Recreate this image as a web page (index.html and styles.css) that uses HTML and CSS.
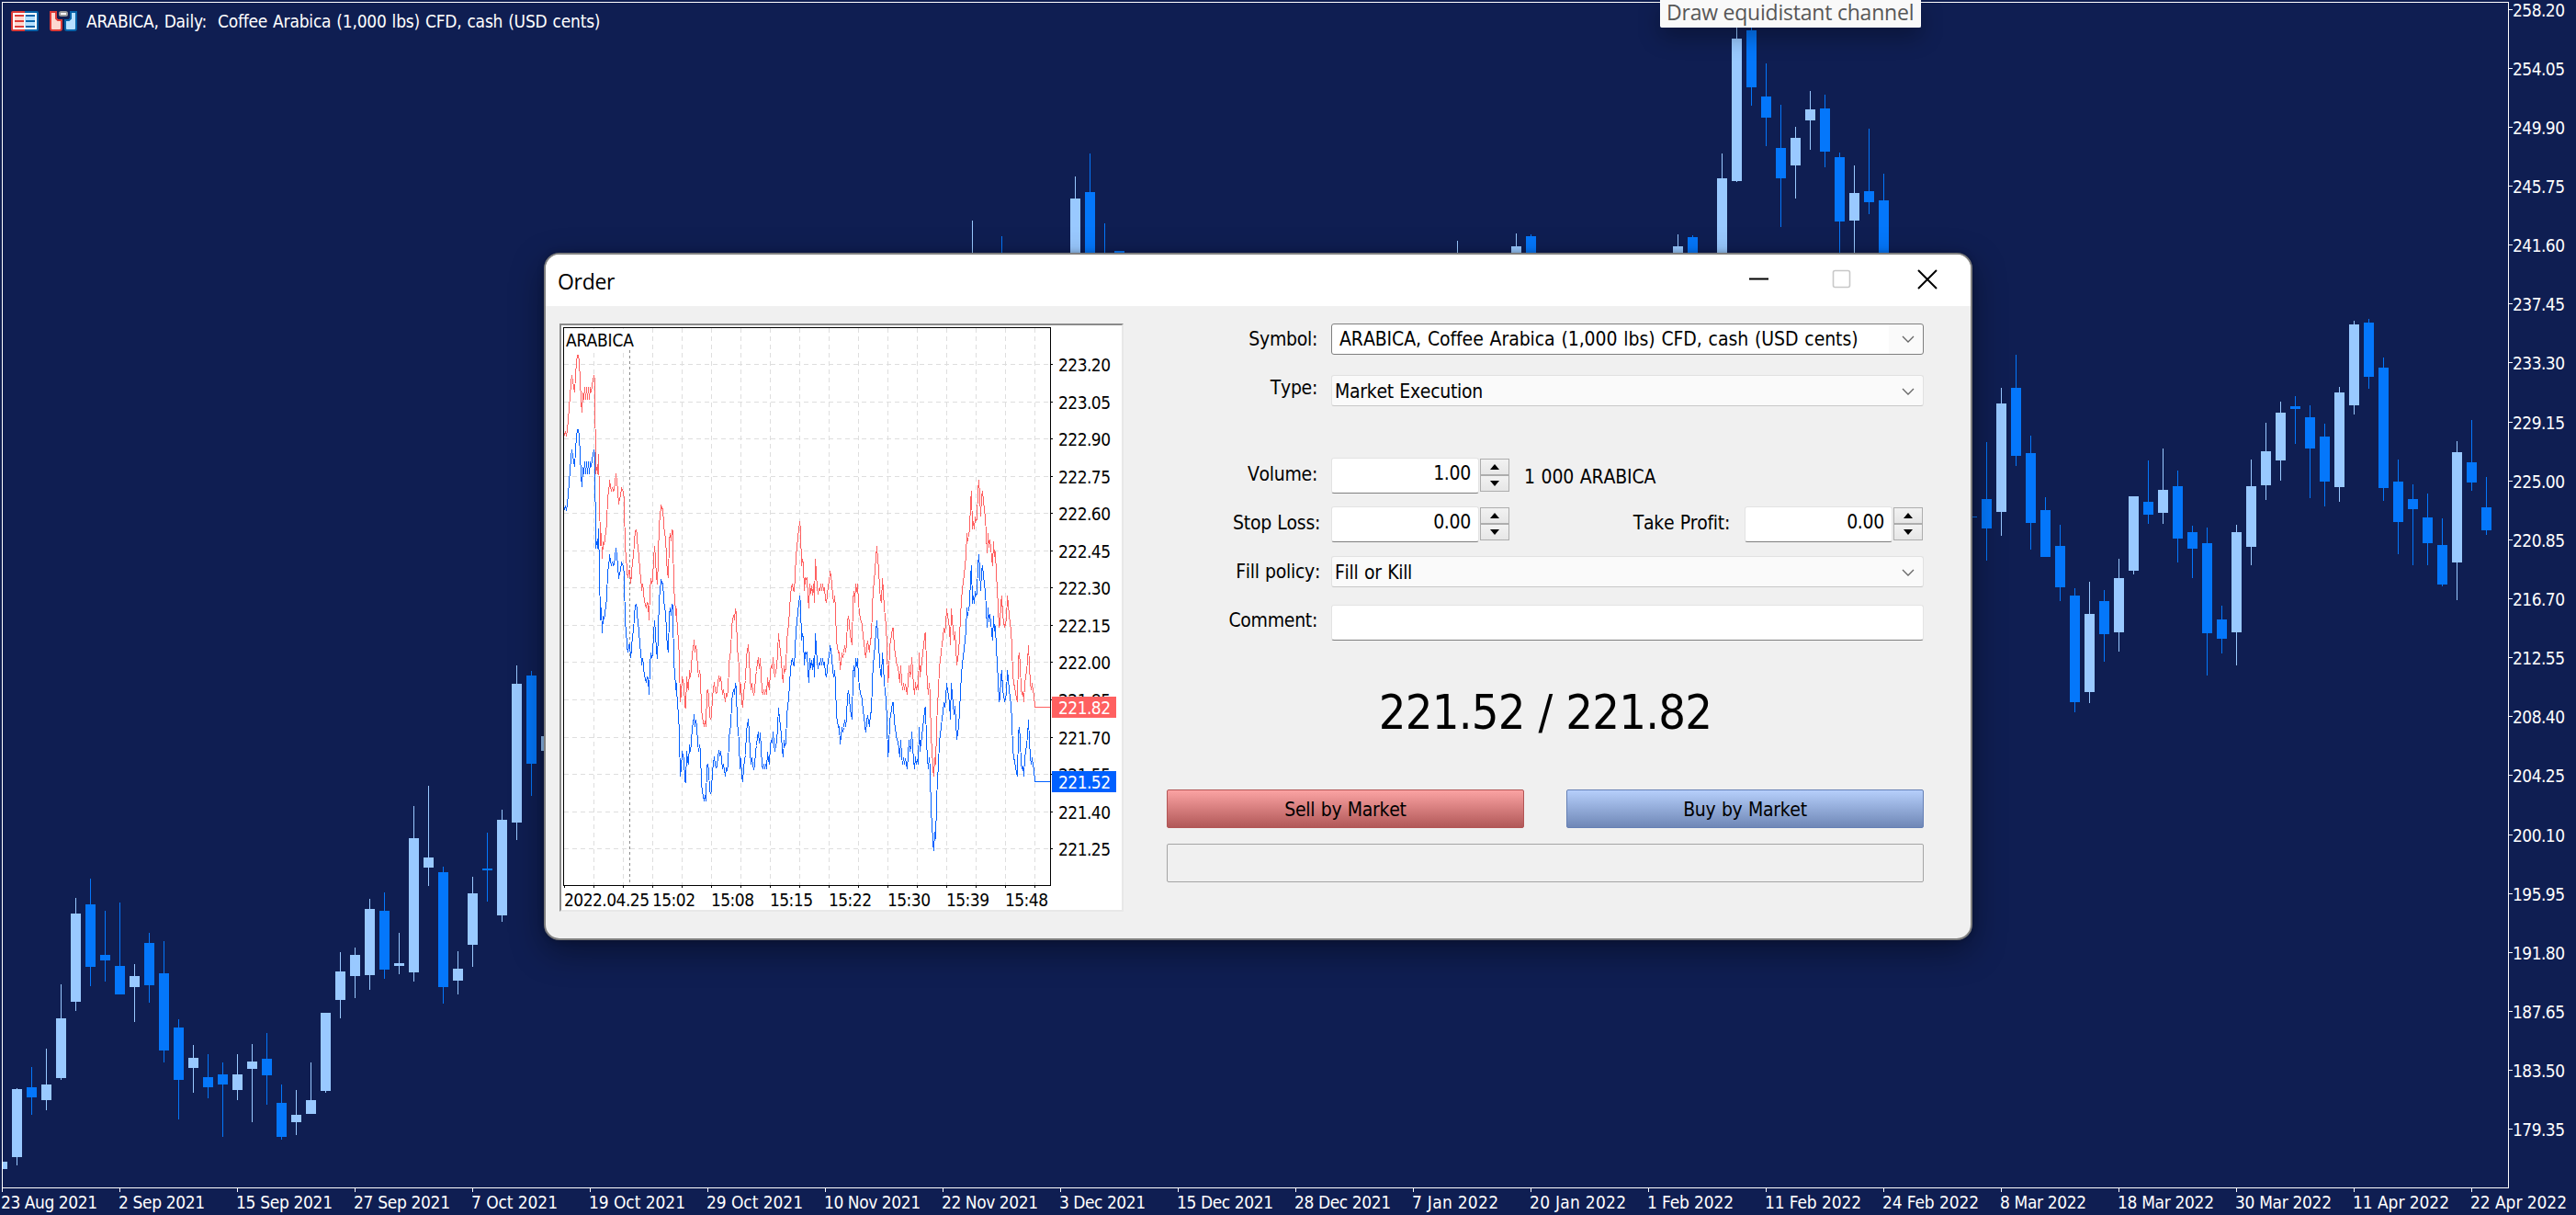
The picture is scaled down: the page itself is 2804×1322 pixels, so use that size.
FILE: index.html
```html
<!DOCTYPE html>
<html lang="en">
<head>
  <meta charset="UTF-8" />
  <title>ARABICA, Daily</title>
  <link rel="stylesheet" href="styles.css">
</head>
<body>

  <div class="terminal">
    <svg class="chart" id="chart" width="2804" height="1322" viewBox="0 0 2804 1322">
      <g id="candles"></g>
      <path class="frame" d="M2 2H2731V3H3V1292H2730V3H2731V1293H2V2Z" />
      <g id="priceAxis"></g>
      <g id="timeAxis"></g>
    </svg>

    <div class="chart-title">
      <svg width="30" height="22" viewBox="0 0 30 22">
        <path d="M2 0H15V22H2Q0 22 0 20V2Q0 0 2 0Z" fill="#dc3a36" />
        <path d="M15 0H28Q30 0 30 2V20Q30 22 28 22H15Z" fill="#0562a8" />
        <rect x="2" y="2" width="26" height="18" fill="#fff" />
        <rect x="4" y="4" width="10" height="14" fill="#fdd8d0" />
        <rect x="15" y="4" width="11" height="14" fill="#b7e0ff" />
        <path d="M4 4h10v2H4zM4 10h10v2H4zM4 16h10v2H4z" fill="#dc3a36" />
        <path d="M16 4h10v2H16zM16 10h10v2H16zM16 16h10v2H16z" fill="#0562a8" />
      </svg>
      <svg width="30" height="22" viewBox="0 0 30 22">
        <path d="M1 1H7V8L9 10H13V19Q13 21 11 21H3Q1 21 1 19Z" fill="#fdd8d0" stroke="#dc3a36" stroke-width="2" />
        <path d="M23 1H29V19Q29 21 27 21H19Q17 21 17 19V10H21L23 8Z" fill="#b7e0ff" stroke="#0562a8" stroke-width="2" />
        <rect x="11" y="1" width="8" height="4" rx="1.5" fill="#fff" stroke="#999" stroke-width="2" />
      </svg>
      <span class="chart-name">ARABICA, Daily:&nbsp; Coffee Arabica (1,000 lbs) CFD, cash (USD cents)</span>
    </div>

    <div class="tooltip">Draw equidistant channel</div>

    <div class="dialog">
      <div class="titlebar">
        <span class="caption">Order</span>
        <svg class="controls" width="206" height="24" viewBox="0 0 206 24">
          <path d="M0 11.5H21" stroke="#000" stroke-width="2" />
          <rect x="91.5" y="2.5" width="18" height="18" rx="2" fill="none" stroke="#c8c8c8" stroke-width="1.6" />
          <path d="M184 2L204 22M204 2L184 22" stroke="#000" stroke-width="2" />
        </svg>
      </div>

      <div class="content">
        <div class="ticks">
          <svg id="ticks" width="610" height="636" viewBox="611 354 610 636"></svg>
        </div>

        <div class="form">
          <div class="row row-symbol">
            <label>Symbol:</label>
            <div class="select active"><span>ARABICA, Coffee Arabica (1,000 lbs) CFD, cash (USD cents)</span><i><svg width="14" height="8" viewBox="0 0 14 8"><path d="M1 1L7 7L13 1" /></svg></i></div>
          </div>
          <div class="row row-type">
            <label>Type:</label>
            <div class="select"><span>Market Execution</span><i><svg width="14" height="8" viewBox="0 0 14 8"><path d="M1 1L7 7L13 1" /></svg></i></div>
          </div>
          <div class="row row-volume">
            <label>Volume:</label>
            <div class="input number">1.00</div>
            <div class="spin"><b class="up"></b><b class="down"></b></div>
            <span class="units">1 000 ARABICA</span>
          </div>
          <div class="row row-stops">
            <label class="wide">Stop Loss:</label>
            <div class="input number">0.00</div>
            <div class="spin"><b class="up"></b><b class="down"></b></div>
            <label class="take">Take Profit:</label>
            <div class="input number">0.00</div>
            <div class="spin"><b class="up"></b><b class="down"></b></div>
          </div>
          <div class="row row-fill">
            <label class="wide">Fill policy:</label>
            <div class="select"><span>Fill or Kill</span><i><svg width="14" height="8" viewBox="0 0 14 8"><path d="M1 1L7 7L13 1" /></svg></i></div>
          </div>
          <div class="row row-comment">
            <label>Comment:</label>
            <div class="input text"></div>
          </div>
          <div class="quote">221.52 / 221.82</div>
          <div class="buttons">
            <div class="btn sell">Sell by Market</div>
            <div class="btn buy">Buy by Market</div>
          </div>
          <div class="status"></div>
        </div>
      </div>
    </div>
  </div>

  <script src="chart.js"></script>
</body>
</html>
```
FILE: styles.css
```css
body {
  margin: 0;
  background: #0f1e52;
  font-family: "DejaVu Sans Condensed", "DejaVu Sans", sans-serif;
  font-stretch: condensed;
  overflow: hidden;
}

.terminal {
  position: relative;
  width: 2804px;
  height: 1322px;
  overflow: hidden;
}

.chart {
  display: block;
  shape-rendering: crispEdges;
}

.chart text,
.ticks text {
  font-size: 19px;
}

.chart text {
  fill: #fff;
}

.frame {
  fill: #fff;
}

.up-bar {
  fill: #99c9ff;
}

.down-bar {
  fill: #0477fb;
}

.chart-title {
  position: absolute;
  left: 12px;
  top: 12px;
  display: flex;
  align-items: flex-start;
  gap: 12px;
  color: #fff;
}

.chart-name {
  font-size: 19px;
  line-height: 22px;
  margin-left: -2px;
  letter-spacing: -0.2px;
  word-spacing: 0.7px;
  white-space: nowrap;
}

.tooltip {
  position: absolute;
  left: 1807px;
  top: 0;
  width: 284px;
  height: 30px;
  box-sizing: border-box;
  padding-left: 6px;
  border: 1px solid #fff;
  border-top: none;
  border-radius: 0 0 2px 2px;
  background: #f9f9f9;
  color: #575757;
  font-family: "Open Sans", sans-serif;
  font-stretch: normal;
  font-size: 23px;
  line-height: 26px;
  letter-spacing: -0.22px;
  white-space: nowrap;
  box-shadow: 0 10px 24px rgba(0, 0, 0, 0.3);
}

/* order window */
.dialog {
  position: absolute;
  left: 592px;
  top: 275px;
  width: 1555px;
  height: 748px;
  box-sizing: border-box;
  border: 2px solid #7f7f7f;
  border-radius: 17px;
  background: #f0f0f0;
  overflow: hidden;
  box-shadow: 0 12px 36px rgba(0, 0, 0, 0.4), 0 0 6px rgba(0, 0, 0, 0.25);
}

.titlebar {
  display: flex;
  justify-content: space-between;
  align-items: center;
  height: 56px;
  padding: 0 35px 0 13px;
  background: #fff;
}

.caption {
  padding-top: 2px;
  font-family: "Open Sans", sans-serif;
  font-stretch: normal;
  font-size: 23px;
  letter-spacing: -0.3px;
}

.controls {
  margin-top: -2px;
}

.content {
  display: flex;
  padding: 19px 51px 0 15px;
}

.ticks {
  width: 610px;
  height: 636px;
  border: 2px solid;
  border-color: #8a8a8a #e8e8e8 #e8e8e8 #8a8a8a;
  background: #fff;
}

.ticks svg {
  display: block;
  shape-rendering: crispEdges;
}

.grid {
  stroke: #dedede;
  stroke-dasharray: 5 4;
}

.separator {
  stroke: #8c8c8c;
  stroke-dasharray: 3 3;
}

.ask {
  fill: none;
  stroke: #ff6060;
}

.bid {
  fill: none;
  stroke: #0060ff;
}

.ask-tag {
  fill: #ff6060;
}

.bid-tag {
  fill: #0060ff;
}

.ticks .tag-text {
  fill: #fff;
}

.form {
  width: 824px;
  margin-left: 47px;
  font-size: 21px;
  line-height: 24px;
  letter-spacing: -0.3px;
  word-spacing: 0.8px;
  font-kerning: none;
}

.row {
  display: flex;
  align-items: flex-start;
}

.row label {
  width: 164px;
  margin-right: 15px;
  padding-top: 5px;
  text-align: right;
  white-space: nowrap;
}

.row label.wide {
  width: 167px;
  margin-right: 12px;
}

.row-type {
  margin-top: 22px;
}

.row-type label {
  padding-top: 2px;
}

.row-volume {
  margin-top: 56px;
}

.row-stops {
  margin-top: 14px;
}

.row-fill {
  margin-top: 15px;
}

.row-comment {
  margin-top: 19px;
}

.row-stops label,
.row-volume label {
  padding-top: 6px;
}

.row label.take {
  width: 240px;
  margin-right: 16px;
}

.select {
  display: flex;
  flex: 1;
  justify-content: space-between;
  align-items: center;
  height: 34px;
  box-sizing: border-box;
  padding: 2px 9px 0 3px;
  border: 1px solid #e1e1e1;
  border-bottom-color: #c8c8c8;
  border-radius: 3px;
  background: #fafafa;
  white-space: nowrap;
}

.select.active {
  padding: 0 9px 0 8px;
  border-color: #7f7f7f;
  background: linear-gradient(90deg, #fff 606px, #fafafa 606px);
  letter-spacing: -0.08px;
  word-spacing: 1px;
}

.select i {
  display: flex;
}

.select path {
  fill: none;
  stroke: #666;
  stroke-width: 1.3;
}

.input {
  height: 39px;
  box-sizing: border-box;
  border: 1px solid #e3e3e3;
  border-bottom: 1px solid #7f7f7f;
  border-radius: 3px;
  background: #fff;
}

.input.number {
  width: 161px;
  padding: 4px 8px 0 0;
  text-align: right;
}

.input.text {
  flex: 1;
}

.spin {
  display: grid;
  grid-template-rows: 18px 18px;
  width: 32px;
  margin: 1px 0 0 1px;
}

.spin b {
  display: flex;
  align-items: center;
  justify-content: center;
  border: 1px solid #adadad;
  background: linear-gradient(#f2f2f2, #e6e6e6);
  box-sizing: border-box;
}

.spin b::after {
  content: "";
  border: 5px solid transparent;
}

.spin .up::after {
  border-top: none;
  border-bottom: 6px solid #000;
}

.spin .down::after {
  border-bottom: none;
  border-top: 6px solid #000;
}

.units {
  margin-left: 16px;
  padding-top: 9px;
  letter-spacing: -0.15px;
}

.quote {
  margin-top: 48px;
  height: 60px;
  font-size: 52px;
  line-height: 60px;
  letter-spacing: -0.8px;
  text-align: center;
}

.buttons {
  display: grid;
  grid-template-columns: 389px 389px;
  justify-content: space-between;
  margin-top: 54px;
}

.btn {
  height: 42px;
  box-sizing: border-box;
  border: 1px solid #b25555;
  border-radius: 2px;
  line-height: 42px;
  text-align: center;
}

.sell {
  background: linear-gradient(#fba3a3, #b15858);
}

.buy {
  border-color: #6580b5;
  background: linear-gradient(#b6cffb, #6f87b6);
}

.status {
  height: 42px;
  margin-top: 17px;
  box-sizing: border-box;
  border: 1px solid #a5a5a5;
  border-radius: 2px;
}
```
FILE: chart.js
```js
const NS = 'http://www.w3.org/2000/svg';

function add(parent, name, attrs, text) {
  const el = document.createElementNS(NS, name);
  for (const key in attrs) el.setAttribute(key, attrs[key]);
  if (text) el.textContent = text;
  parent.appendChild(el);
  return el;
}

// bar index, high, body top, body bottom, low, 1 = rising / 0 = falling
const bars = [
  [0, 1264, 1264, 1272, 1272, 1], [1, 1184, 1185, 1259, 1268, 1], [2, 1161, 1183, 1194, 1213, 0],
  [3, 1141, 1180, 1197, 1208, 1], [4, 1071, 1108, 1173, 1175, 1], [5, 977, 994, 1090, 1100, 1],
  [6, 956, 984, 1052, 1073, 0], [7, 991, 1039, 1045, 1068, 0], [8, 982, 1051, 1082, 1082, 0],
  [9, 1049, 1062, 1074, 1112, 1], [10, 1015, 1026, 1072, 1091, 0], [11, 1024, 1059, 1143, 1156, 0],
  [12, 1109, 1118, 1175, 1218, 0], [13, 1137, 1151, 1162, 1189, 1], [14, 1147, 1172, 1183, 1195, 0],
  [15, 1156, 1169, 1180, 1237, 0], [16, 1147, 1169, 1186, 1197, 1], [17, 1136, 1155, 1163, 1221, 1],
  [18, 1124, 1152, 1170, 1202, 0], [19, 1180, 1200, 1237, 1240, 0], [20, 1186, 1213, 1221, 1235, 1],
  [21, 1156, 1197, 1212, 1212, 1], [22, 1102, 1102, 1187, 1189, 1], [23, 1036, 1057, 1088, 1108, 1],
  [24, 1031, 1039, 1062, 1086, 1], [25, 978, 989, 1061, 1077, 1], [26, 971, 991, 1055, 1065, 0],
  [27, 1015, 1048, 1051, 1060, 1], [28, 877, 912, 1058, 1068, 1], [29, 855, 933, 944, 964, 1],
  [30, 943, 949, 1074, 1092, 0], [31, 1035, 1054, 1067, 1082, 1], [32, 954, 972, 1028, 1052, 1],
  [33, 906, 945, 947, 981, 0], [34, 881, 892, 996, 1003, 1], [35, 724, 744, 895, 914, 1],
  [36, 730, 735, 831, 866, 0], [37, 801, 801, 817, 817, 1],
  [66, 240, 290, 300, 300, 1], [68, 257, 290, 300, 300, 0], [73, 192, 216, 300, 300, 1],
  [74, 167, 209, 300, 300, 0], [75, 243, 290, 300, 300, 0], [76, 273, 273, 300, 300, 0],
  [99, 262, 290, 300, 300, 1], [103, 254, 268, 300, 300, 1], [104, 255, 257, 300, 300, 0],
  [114, 255, 268, 300, 300, 1], [115, 256, 258, 300, 300, 0], [117, 167, 194, 300, 300, 1],
  [118, 20, 42, 197, 198, 1], [119, 20, 33, 95, 115, 0], [120, 69, 105, 128, 159, 0],
  [121, 114, 161, 194, 247, 0], [122, 138, 150, 180, 216, 1], [123, 99, 119, 131, 163, 1],
  [124, 103, 118, 165, 182, 0], [125, 166, 171, 241, 300, 0], [126, 180, 210, 240, 300, 1],
  [127, 140, 208, 220, 233, 0], [128, 189, 218, 300, 300, 0],
  [134, 562, 562, 563, 563, 0], [135, 481, 543, 575, 610, 0], [136, 422, 439, 557, 583, 1],
  [137, 386, 422, 496, 507, 0], [138, 474, 493, 569, 598, 0], [139, 541, 555, 606, 606, 0],
  [140, 571, 594, 639, 654, 0], [141, 640, 648, 764, 775, 0], [142, 633, 668, 753, 765, 1],
  [143, 642, 654, 690, 720, 0], [144, 608, 629, 688, 709, 1], [145, 540, 540, 621, 625, 1],
  [146, 501, 546, 560, 570, 0], [147, 488, 533, 558, 570, 1], [148, 512, 529, 586, 612, 0],
  [149, 572, 579, 597, 629, 0], [150, 574, 591, 689, 735, 0], [151, 659, 674, 695, 711, 0],
  [152, 571, 579, 688, 724, 1], [153, 500, 529, 595, 615, 1], [154, 460, 491, 528, 544, 1],
  [155, 437, 449, 501, 523, 1], [156, 431, 442, 445, 483, 0], [157, 441, 454, 488, 542, 0],
  [158, 461, 475, 524, 551, 0], [159, 421, 427, 530, 546, 1], [160, 349, 353, 441, 451, 1],
  [161, 347, 351, 410, 423, 0], [162, 389, 400, 531, 545, 0], [163, 500, 524, 568, 603, 0],
  [164, 527, 543, 554, 615, 0], [165, 537, 563, 591, 615, 0], [166, 564, 593, 636, 638, 0],
  [167, 480, 492, 612, 653, 1], [168, 457, 503, 525, 534, 0], [169, 519, 552, 577, 582, 0]
];

const candles = document.getElementById('candles');
bars.forEach(([i, high, top, bottom, low, up]) => {
  const cls = up ? 'up-bar' : 'down-bar';
  const left = Math.max(2, 16 * i - 3);
  add(candles, 'rect', { class: cls, x: left, y: top, width: 16 * i + 8 - left, height: bottom - top });
  if (low > high) add(candles, 'rect', { class: cls, x: 16 * i + 2, y: high, width: 1, height: low - high });
});

const priceAxis = document.getElementById('priceAxis');
for (let i = 0; i < 20; i++) {
  const y = Math.floor(10.2 + 64.13 * i);
  add(priceAxis, 'rect', { class: 'frame', x: 2731, y: y, width: 4, height: 1 });
  add(priceAxis, 'text', { x: 2735, y: y + 8, textLength: 57 }, (258.2 - 4.15 * i).toFixed(2));
}

const dates = ['23 Aug 2021', '2 Sep 2021', '15 Sep 2021', '27 Sep 2021', '7 Oct 2021', '19 Oct 2021',
  '29 Oct 2021', '10 Nov 2021', '22 Nov 2021', '3 Dec 2021', '15 Dec 2021', '28 Dec 2021', '7 Jan 2022',
  '20 Jan 2022', '1 Feb 2022', '11 Feb 2022', '24 Feb 2022', '8 Mar 2022', '18 Mar 2022', '30 Mar 2022',
  '11 Apr 2022', '22 Apr 2022'];
const timeAxis = document.getElementById('timeAxis');
dates.forEach((date, i) => {
  const x = 2 + 128 * i;
  add(timeAxis, 'rect', { class: 'frame', x: x, y: 1293, width: 1, height: 4 });
  add(timeAxis, 'text', { x: x - 1, y: 1315, textLength: date.length === 11 ? 105 : 94 }, date);
});

// ask line, one sample per pixel column, in thirds of a pixel
const ask = [
  370, 355, 374, 350, 320, 280, 240, 200, 172, 195, 212, 228, 175, 130, 109, 109, 130, 190, 255, 296,
  230, 252, 213, 253, 213, 253, 213, 253, 213, 230, 205, 190, 172, 190, 495, 472, 497,
  432, 565, 730, 690, 772, 715, 728, 710, 680, 662, 565, 562, 514, 538, 552, 538, 552, 550, 520, 495,
  520, 550, 596, 572, 570, 538, 550, 552, 585, 750, 752, 820, 835, 811, 811, 853, 828, 775, 772, 712,
  685, 676, 697, 750, 752, 822, 825, 878, 853, 880, 915, 920, 933, 915, 917, 973, 878, 835, 852, 840,
  775, 730, 770, 830, 855, 775, 655, 640, 595, 610, 610, 655, 695, 700, 770, 820, 835, 710, 690, 715,
  676, 685, 885, 890, 958, 935, 1020, 1023, 1115, 1240, 1215, 1158, 1172, 1182, 1255, 1258, 1158, 1188,
  1200, 1135, 1158, 1130, 1075, 1070, 1038, 1078, 1055, 1078, 1133, 1158, 1135, 1160, 1262, 1290, 1305,
  1322, 1300, 1322, 1203, 1200, 1222, 1285, 1297, 1285, 1222, 1200, 1176, 1200, 1213, 1210, 1172, 1160,
  1170, 1158, 1185, 1215, 1200, 1218, 1240, 1210, 1218, 1205, 1120, 1085, 1078, 995, 970, 957, 972, 935,
  950, 1070, 1088, 1130, 1215, 1180, 1240, 1258, 1215, 1185, 1170, 1090, 1075, 1053, 1095, 1160, 1200,
  1178, 1205, 1218, 1205, 1155, 1140, 1110, 1095, 1132, 1097, 1150, 1205, 1215, 1200, 1215, 1200, 1215,
  1160, 1185, 1200, 1140, 1120, 1133, 1095, 1133, 1160, 1135, 1132, 1075, 1015, 1055, 1070, 1108, 1150,
  1178, 1122, 1140, 1128, 1040, 1010, 985, 940, 890, 868, 853, 875, 878, 830, 760, 740, 700, 680, 650,
  680, 795, 772, 790, 878, 835, 840, 835, 895, 935, 853, 885, 860, 892, 853, 915, 772, 820, 865, 890,
  868, 878, 853, 878, 853, 878, 865, 905, 915, 895, 855, 853, 811, 830, 850, 895, 915, 892, 935, 1045,
  1060, 1080, 1078, 1135, 1110, 1078, 1095, 1080, 1055, 1078, 1050, 975, 958, 985, 1020, 1040, 1053,
  908, 878, 915, 855, 880, 853, 920, 945, 970, 975, 990, 1030, 1045, 1075, 1097, 1060, 1040, 1060, 1078,
  1035, 1030, 935, 870, 850, 805, 770, 730, 775, 805, 870, 905, 915, 835, 875, 935, 960, 990, 1055,
  1178, 1150, 1060, 1040, 1020, 998, 1000, 1070, 1075, 1110, 1120, 1125, 1150, 1178, 1120, 1175, 1200,
  1178, 1200, 1180, 1200, 1215, 1170, 1120, 1160, 1140, 1095, 1140, 1190, 1215, 1175, 1200, 1185, 1200,
  1078, 1160, 1125, 1115, 1075, 1060, 1020, 1015, 1125, 1180, 1215, 1178, 1215, 1365, 1385, 1460, 1483,
  1420, 1445, 1330, 1240, 1210, 1120, 1110, 1075, 1050, 1030, 998, 1015, 985, 935, 960, 975, 1000, 1053,
  935, 975, 1000, 1040, 1010, 1060, 1120, 1100, 1075, 1030, 960, 910, 870, 850, 820, 800, 760, 690, 715,
  690, 680, 585, 552, 675, 650, 675, 635, 650, 640, 550, 515, 565, 635, 570, 552, 585, 610, 640, 690,
  755, 690, 735, 710, 735, 770, 797, 715, 765, 750, 825, 870, 930, 998, 985, 915, 892, 960, 975, 998,
  985, 970, 892, 920, 960, 980, 1005, 1060, 1150, 1180, 1190, 1210, 1230, 1240, 1100, 1078, 1120, 1200,
  1215, 1205, 1240, 1180, 1158, 1135, 1110, 1055, 1120, 1180, 1200, 1178, 1205, 1215, 1258
];

const ticks = document.getElementById('ticks');

for (let i = 0; i < 16; i++) {
  const x = 646.5 + 32 * i;
  add(ticks, 'path', { class: 'grid', d: `M${x} 357V963` });
  add(ticks, 'rect', { x: x - 0.5, y: 964, width: 1, height: 2 });
}
add(ticks, 'rect', { x: 614, y: 964, width: 1, height: 2 });

for (let i = 0; i < 14; i++) {
  const y = Math.round(396 + 40.55 * i);
  add(ticks, 'path', { class: 'grid', d: `M614 ${y + 0.5}H1143` });
  add(ticks, 'rect', { x: 1144, y: y, width: 2, height: 1 });
  add(ticks, 'text', { x: 1152, y: y + 8, textLength: 57 }, (223.2 - 0.15 * i).toFixed(2));
}
add(ticks, 'path', { class: 'separator', d: 'M685.5 381V963' });

function line(cls, shift) {
  const points = ask.map((v, i) => `${614.5 + i},${(350.5 + v / 3 + shift).toFixed(1)}`);
  points.push(`1143,${(769.5 + shift).toFixed(1)}`);
  add(ticks, 'polyline', { class: cls, points: points.join(' ') });
}
line('ask', 0);
line('bid', 81);

add(ticks, 'rect', { x: 613.5, y: 356.5, width: 530, height: 607, fill: 'none', stroke: '#000' });
add(ticks, 'rect', { x: 615, y: 358, width: 77, height: 22, fill: '#fff' });
add(ticks, 'text', { x: 616, y: 377, textLength: 74 }, 'ARABICA');

[['ask-tag', 758, '221.82'], ['bid-tag', 839, '221.52']].forEach(([cls, y, text]) => {
  add(ticks, 'rect', { class: cls, x: 1145, y: y, width: 70, height: 23 });
  add(ticks, 'text', { class: 'tag-text', x: 1152, y: y + 19, textLength: 57 }, text);
});

add(ticks, 'text', { x: 614, y: 986, textLength: 93 }, '2022.04.25');
['15:02', '15:08', '15:15', '15:22', '15:30', '15:39', '15:48'].forEach((time, i) => {
  add(ticks, 'text', { x: 710 + 64 * i, y: 986, textLength: 47 }, time);
});
```
